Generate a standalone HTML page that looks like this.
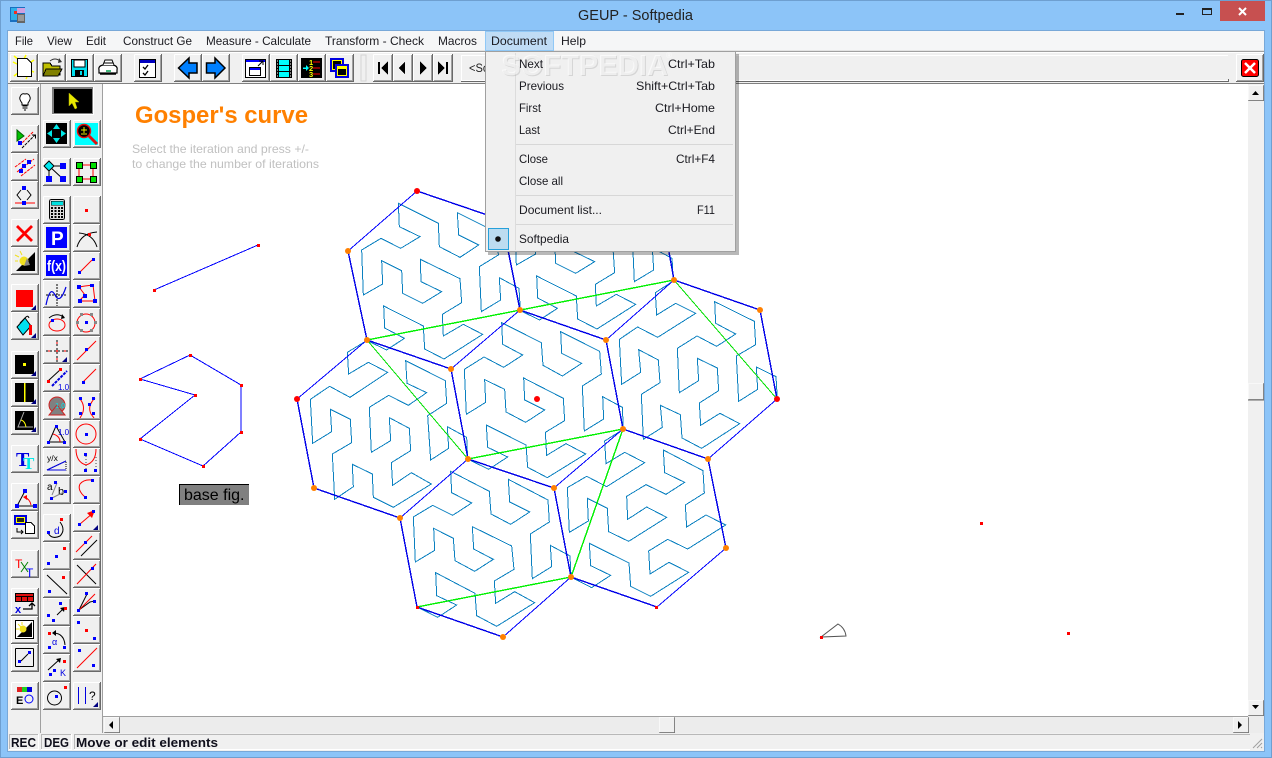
<!DOCTYPE html>
<html><head><meta charset="utf-8"><title>GEUP - Softpedia</title>
<style>
html,body{margin:0;padding:0;background:#8cc4f8;width:1272px;height:758px;overflow:hidden}
svg{display:block;position:absolute;left:0;top:0;font-family:"Liberation Sans",sans-serif}
.c{fill:none;stroke:#0a80c0;stroke-width:1;vector-effect:non-scaling-stroke;shape-rendering:crispEdges}
.tn{fill:none;stroke:#0000ff;stroke-width:1;shape-rendering:crispEdges}
.tk{fill:none;stroke:#0000e8;stroke-width:1.4;shape-rendering:crispEdges}
.g1{fill:none;stroke:#00e000;stroke-width:1;shape-rendering:crispEdges}
.g2{fill:none;stroke:#00f000;stroke-width:1.4;shape-rendering:crispEdges}
.m{font-size:12px;fill:#1a1a20}
.k{shape-rendering:crispEdges}
.l{fill:none;stroke:#000;stroke-width:1}
.r{fill:none;stroke:#f00;stroke-width:1}
.bl{fill:#0000ff}.rd{fill:#ff0000}
</style></head><body>
<svg width="1272" height="758" viewBox="0 0 1272 758" xmlns="http://www.w3.org/2000/svg">
<defs>
<g id="b" class="k"><rect width="28" height="28" fill="#f0f0f0"/><path d="M0 0H27M0 0V27" stroke="#fff" fill="none" transform="translate(.5 .5)"/><path d="M0 27.500H28M27.500 0V28" stroke="#696969" fill="none"/><path d="M1 26.500H27M26.500 1V27" stroke="#a0a0a0" fill="none"/></g>
<g id="n" class="k"><rect width="20" height="28" fill="#f0f0f0"/><path d="M0 0H19M0 0V27" stroke="#fff" fill="none" transform="translate(.5 .5)"/><path d="M0 27.500H20M19.500 0V28" stroke="#696969" fill="none"/><path d="M1 26.500H19M18.500 1V27" stroke="#a0a0a0" fill="none"/></g>
<path id="cn" d="M0 5L5 0V5Z" fill="#000080"/>
<polyline id="curveA" class="c" points="80,481 140,510 193,475 134,444 131,378 250,438 254,507 312,537 428,463 370,433 310,468 307,403 365,368 360,296 241,238 243,305 305,335 248,370 188,340 185,272 125,242 128,312 70,345 65,210 123,175 182,205 240,170 178,140 175,70 295,130 298,200 360,232 416,195 356,165 352,98 472,158 475,225 418,260 424,395 482,360 478,293 537,325 541,391"/>
</defs>

<!-- window chrome -->
<rect width="1272" height="758" fill="#8cc4f8"/>
<rect x=".5" y=".5" width="1271" height="757" fill="none" stroke="#6e9fd0" class="k"/>
<text x="635.500" y="20" font-size="14.500" text-anchor="middle" fill="#222">GEUP - Softpedia</text>
<g class="k"><rect x="1176" y="13" width="8" height="2" fill="#222"/>
<rect x="1202.500" y="8.500" width="9" height="6" fill="none" stroke="#222"/><rect x="1202" y="8" width="10" height="2" fill="#222"/>
<rect x="1220" y="1" width="45" height="20" fill="#c75050"/></g>
<path d="M1239 8L1246 15M1246 8L1239 15" stroke="#fff" stroke-width="2" fill="none"/>
<!-- app icon -->
<g class="k"><rect x="10" y="7" width="15" height="15" fill="#1a6fc0"/><rect x="11" y="8" width="6" height="12" fill="#30b0e8"/><rect x="14" y="11" width="3" height="3" fill="#f03020"/><rect x="17" y="8" width="8" height="5" fill="#d0a0e0"/><rect x="17" y="14" width="8" height="9" fill="#666"/><path d="M18 16h6M18 18h6M18 20h6" stroke="#ccc"/></g>

<!-- client -->
<rect x="8" y="31" width="1256" height="720" fill="#f0f0f0"/>
<rect x="8" y="31" width="1256" height="20" fill="#f5f6f7"/>
<rect x="8" y="30" width="1257" height="1" fill="#78a8d8"/>
<rect x="7" y="30" width="1" height="722" fill="#78a8d8"/>
<rect x="1264" y="30" width="1" height="722" fill="#78a8d8"/>
<rect x="7" y="751" width="1258" height="1" fill="#78a8d8"/>
<rect x="8" y="50" width="1256" height="1" fill="#e4e4e4"/>
<rect x="8" y="51" width="1256" height="1" fill="#a0a0a0"/>
<rect x="8" y="52" width="1256" height="1" fill="#fff"/>

<g class="m" lengthAdjust="spacingAndGlyphs">
<text x="15" y="45" textLength="18" lengthAdjust="spacingAndGlyphs">File</text><text x="47" y="45" textLength="25" lengthAdjust="spacingAndGlyphs">View</text><text x="86" y="45" textLength="20" lengthAdjust="spacingAndGlyphs">Edit</text><text x="123" y="45" textLength="69" lengthAdjust="spacingAndGlyphs">Construct Ge</text><text x="206" y="45" textLength="105" lengthAdjust="spacingAndGlyphs">Measure - Calculate</text><text x="325" y="45" textLength="99" lengthAdjust="spacingAndGlyphs">Transform - Check</text><text x="438" y="45" textLength="39" lengthAdjust="spacingAndGlyphs">Macros</text><text x="561" y="45" textLength="25" lengthAdjust="spacingAndGlyphs">Help</text>
</g>

<!-- drawing area -->
<rect x="103" y="84" width="1145" height="632" fill="#fff"/>
<rect x="8" y="83" width="1256" height="1" fill="#808080"/>
<rect x="40" y="84" width="1" height="650" fill="#a0a0a0"/>
<rect x="102" y="84" width="1" height="650" fill="#a0a0a0"/>

<text x="135" y="123" font-size="24" font-weight="bold" fill="#ff8000" textLength="173" lengthAdjust="spacingAndGlyphs">Gosper's curve</text>
<text x="132" y="153" font-size="12" fill="#c0c0c0" textLength="177" lengthAdjust="spacingAndGlyphs">Select the iteration and press +/-</text>
<text x="132" y="168" font-size="12" fill="#c0c0c0" textLength="187" lengthAdjust="spacingAndGlyphs">to change the number of iterations</text>

<!-- small figures -->
<path class="tn" d="M154 290L258 245M140 379L190 355L241 385V432L203 466L140 439L195 395L140 379"/>
<g class="rd k"><rect x="153" y="289" width="3" height="3"/><rect x="257" y="244" width="3" height="3"/><rect x="139" y="378" width="3" height="3"/><rect x="189" y="354" width="3" height="3"/><rect x="240" y="384" width="3" height="3"/><rect x="240" y="431" width="3" height="3"/><rect x="202" y="465" width="3" height="3"/><rect x="139" y="438" width="3" height="3"/><rect x="194" y="394" width="3" height="3"/></g>
<g class="k"><rect x="178" y="483" width="72" height="23" fill="#fff"/><rect x="179" y="484" width="70" height="21" fill="#808080"/><path d="M179 484.500H249M179.500 484V505" stroke="#000"/></g>
<text x="184" y="500" font-size="16" fill="#000">base fig.</text>
<path d="M821 637L838 624Q845 628 846 636Z" fill="none" stroke="#555" stroke-width="1"/>
<g class="rd k"><rect x="820" y="636" width="3" height="3"/><rect x="980" y="522" width="3" height="3"/><rect x="1067" y="632" width="3" height="3"/></g>

<!-- curves -->
<g transform="translate(340 180) scale(.33333)"><use href="#curveA"/></g>
<g transform="translate(493 150) scale(.33333)"><use href="#curveA"/></g>
<g transform="translate(290 340) scale(.33333)"><polyline class="c" points="533,358 530,292 472,260 476,325 422,360 413,227 470,190 466,122 347,62 351,130 410,158 355,196 296,166 238,202 244,337 302,302 298,233 358,265 362,332 304,368 308,436 364,398 424,432 310,502 250,472 247,402 187,373 190,440 134,478 127,342 185,308 181,238 121,208 125,275 68,310 61,178 119,139 180,172 293,97 235,67 176,102 172,37 230,2"/></g>
<g transform="translate(400 460) scale(.33333)"><polyline class="c" points="52,441 113,472 170,435 110,407 107,338 225,400 230,467 290,499 404,428 344,395 287,430 283,363 342,328 335,258 217,200 221,267 280,298 224,334 165,302 160,235 101,205 104,271 46,306 40,171 98,136 158,166 215,129 155,98 152,34 268,94 273,162 332,193 389,156 329,126 325,58 444,120 448,186 391,222 397,356 455,320 451,256 510,288 513,352"/></g>
<g transform="translate(450 310) scale(.33333)"><polyline class="c" points="55,448 116,478 173,441 113,412 109,345 228,405 233,472 292,503 407,432 348,401 290,436 286,367 344,332 340,265 221,204 224,270 284,300 227,337 168,306 164,238 104,209 107,277 49,313 43,178 102,141 161,172 218,135 158,103 155,38 274,98 279,166 337,198 395,160 335,130 332,65 449,124 454,192 397,228 403,363 461,327 458,260 517,292 520,358"/></g>
<g transform="translate(600 270) scale(.33333)"><polyline class="c" points="532,388 528,320 469,291 473,358 416,394 409,258 467,224 463,154 344,95 347,160 407,192 350,229 291,198 232,235 238,368 296,332 292,265 352,294 356,362 298,399 302,466 360,430 419,461 305,535 246,504 241,434 181,406 187,472 130,508 124,373 180,338 175,270 116,239 122,307 65,343 58,208 113,171 173,202 287,130 227,100 170,135 166,68 223,31"/></g>
<g transform="translate(555 425) scale(.33333)"><polyline class="c" points="49,457 110,488 167,451 107,422 103,355 222,414 227,484 287,514 401,442 342,412 285,447 281,378 338,343 398,372 512,300 453,270 395,306 391,240 448,204 444,137 325,75 329,143 389,172 333,208 273,179 215,214 218,283 275,246 335,277 221,349 161,320 157,250 97,220 100,288 43,322 37,188 95,154 155,185 269,113 209,82 153,116 149,48 205,13"/></g>

<!-- hex edges -->
<path class="tn" d="M417 191L348 251M367 340L297 399M400 518L468 459M520 310L451 369M606 340L674 280M623 429L554 488M708 459L777 399M571 577L503 637M726 548L657 607"/>
<path class="tk" d="M417 191L502 220L520 310M348 251L367 340L451 369L468 459M297 399L314 488L400 518L417 607L503 637M468 459L554 488L571 577L657 607M520 310L606 340L623 429L708 459L726 548M674 280L658 191M674 280L760 310L777 399"/>
<path class="g1" d="M367 340L468 459M674 280L777 399"/>
<path class="g2" d="M367 340L674 280M468 459L623 429L571 577L417 607"/>
<g fill="#ff8000"><circle cx="348" cy="251" r="3"/><circle cx="367" cy="340" r="3"/><circle cx="451" cy="369" r="3"/><circle cx="520" cy="310" r="3"/><circle cx="606" cy="340" r="3"/><circle cx="674" cy="280" r="3"/><circle cx="760" cy="310" r="3"/><circle cx="708" cy="459" r="3"/><circle cx="726" cy="548" r="3"/><circle cx="623" cy="429" r="3"/><circle cx="468" cy="459" r="3"/><circle cx="554" cy="488" r="3"/><circle cx="571" cy="577" r="3"/><circle cx="503" cy="637" r="3"/><circle cx="400" cy="518" r="3"/><circle cx="314" cy="488" r="3"/></g>
<g fill="#f00"><circle cx="417" cy="191" r="3"/><circle cx="297" cy="399" r="3"/><circle cx="777" cy="399" r="3"/><circle cx="537" cy="399" r="3"/></g>
<g class="rd k"><rect x="655" y="606" width="3" height="3"/><rect x="416" y="606" width="3" height="3"/></g>

<!-- scrollbars -->
<rect x="1248" y="84" width="16" height="632" fill="#f0f0f0"/>
<rect x="103" y="716" width="1161" height="17" fill="#ececec"/>
<rect x="103" y="716" width="1145" height="1" fill="#a0a0a0"/>
<use href="#b" transform="translate(1248 85) scale(.57 .57)"/>
<use href="#b" transform="translate(1248 700) scale(.57 .57)"/>
<use href="#b" transform="translate(1248 383) scale(.57 .62)"/>
<use href="#b" transform="translate(104 717) scale(.57 .57)"/>
<use href="#b" transform="translate(1233 717) scale(.57 .57)"/>
<use href="#b" transform="translate(659 717) scale(.57 .57)"/>
<path d="M1252 95L1255.500 91L1259 95ZM1252 705L1255.500 709L1259 705ZM113 721L109 725L113 729ZM1238 721L1242 725L1238 729Z" fill="#000"/>

<!-- status bar -->
<g class="k"><rect x="8" y="733" width="1256" height="18" fill="#f0f0f0"/>
<path d="M9.500 749.500V734.500H38.500" stroke="#b8b8b8" fill="none"/><path d="M41.500 749.500V734.500H71.500" stroke="#b8b8b8" fill="none"/><path d="M74.500 749.500V734.500H1250" stroke="#b8b8b8" fill="none"/>
<path d="M9 749.500H38.500V734M41 749.500H71.500V734M74 749.500H1250" stroke="#fff" fill="none"/></g>
<g font-size="13" font-weight="bold" fill="#10101c"><text x="11" y="747" textLength="25" lengthAdjust="spacingAndGlyphs">REC</text><text x="44" y="747" textLength="25" lengthAdjust="spacingAndGlyphs">DEG</text><text x="76" y="747" textLength="142" lengthAdjust="spacingAndGlyphs">Move or edit elements</text></g>
<path d="M1262 739L1253 748M1262 743L1257 748M1262 747L1261 748" stroke="#a0a0a0" fill="none"/>

<!-- top toolbar -->
<use href="#b" x="10" y="54"/><use href="#b" x="38" y="54"/><use href="#b" x="66" y="54"/><use href="#b" x="94" y="54"/>
<use href="#b" x="134" y="54"/><use href="#b" x="174" y="54"/><use href="#b" x="202" y="54"/>
<use href="#b" x="242" y="54"/><use href="#b" x="270" y="54"/><use href="#b" x="298" y="54"/><use href="#b" x="326" y="54"/>
<rect x="361" y="55" width="5" height="26" fill="#f0f0f0" stroke="#d4d4d4" class="k"/>
<use href="#n" x="373" y="54"/><use href="#n" x="393" y="54"/><use href="#n" x="413" y="54"/><use href="#n" x="433" y="54"/>
<g class="k"><rect x="461" y="55" width="768" height="27" fill="#f0f0f0"/><path d="M461.500 81V55.500H1228" stroke="#fff" fill="none"/><path d="M461 81.500H1229M1228.500 79V82" stroke="#696969" fill="none"/><path d="M462 80.500H1228" stroke="#fff" fill="none"/></g>
<text x="469" y="72" font-size="12" fill="#222" textLength="20" lengthAdjust="spacingAndGlyphs">&lt;So</text>
<use href="#b" x="1236" y="54"/>
<rect x="1241.500" y="59.500" width="17" height="17" rx="2" fill="#f00" stroke="#000"/>
<path d="M1245 63L1255 73M1255 63L1245 73" stroke="#fff" stroke-width="2.500" fill="none"/>

<!-- tb icons -->
<path d="M13 62L17 64M14 56L19 60M26 55L24 59M34 60L31 62M34 72L31 71M14 76L18 73M26 79L27 77" stroke="#ff0" stroke-width="1.500"/>
<path d="M17.500 58.500H27L31.500 63V76.500H17.500Z" fill="#fff" stroke="#000" class="k"/>
<g class="k"><path d="M43 63H50L52 66H60V75H43Z" fill="#c0c000" stroke="#000"/><path d="M46 69H62L58 76H43Z" fill="#808000" stroke="#000"/></g>
<path d="M50 61Q55 57 60 61" fill="none" stroke="#333"/><path d="M59 58L62 62L58 63Z" fill="#333"/>
<g class="k"><rect x="71.500" y="59.500" width="16" height="17" fill="#00e0f0" stroke="#000"/><rect x="74" y="60" width="11" height="7" fill="#fff" stroke="#000"/><rect x="75" y="70" width="9" height="6" fill="#000"/><rect x="80" y="71" width="2" height="4" fill="#00e0f0"/></g>
<path d="M99 70Q98 66 103 65H113Q118 66 117 70V73H99Z" fill="#fff" stroke="#000" stroke-width="1.200"/><path d="M103 65L105 60H112L114 65M104 63H113" fill="#fff" stroke="#000"/><path d="M106 71H111" stroke="#00a050" stroke-width="1.500"/><path d="M100 74H116" stroke="#000" stroke-width="1.500"/>
<g class="k"><rect x="139.500" y="59.500" width="16" height="18" fill="#fff" stroke="#000"/><rect x="140" y="60" width="15" height="3" fill="#0000c0"/></g>
<path d="M143 67L145 69L148 65M143 73L145 75L148 71" stroke="#000" fill="none" stroke-width="1.300"/>
<path d="M178.500 68L189 58V63H197V73H189V78Z" fill="#0080ff" stroke="#000" stroke-width="1.500"/>
<path d="M225 68L215 58V63H206.500V73H215V78Z" fill="#0080ff" stroke="#000" stroke-width="1.500"/>
<g class="k"><rect x="245.500" y="59.500" width="20" height="18" fill="#fff" stroke="#000"/><rect x="246" y="60" width="19" height="2" fill="#00f"/><rect x="249.500" y="67.500" width="11" height="8" fill="#fff" stroke="#000"/><rect x="250" y="68" width="10" height="2" fill="#00f"/></g>
<path d="M258 66L263 61M259 61H263V65" stroke="#000" fill="none"/>
<g class="k"><rect x="276" y="59" width="16" height="19" fill="#000"/><rect x="279" y="60" width="10" height="5" fill="#00ffff"/><rect x="279" y="66" width="10" height="5" fill="#00ffff"/><rect x="279" y="72" width="10" height="5" fill="#00ffff"/><path d="M277 61h1M277 64h1M277 67h1M277 70h1M277 73h1M277 76h1M290 61h1M290 64h1M290 67h1M290 70h1M290 73h1M290 76h1" stroke="#fff"/></g>
<g class="k"><rect x="301" y="58" width="21" height="20" fill="#000"/><path d="M313 62h7M313 68h7M313 74h7" stroke="#f00"/><path d="M303 68h4" stroke="#00ffff" stroke-width="1.500"/></g>
<path d="M306 65l3 3l-3 3z" fill="#00ffff"/><g fill="#ff0" font-size="7.500" font-weight="bold"><text x="309" y="65">1</text><text x="309" y="71">2</text><text x="309" y="77">3</text></g>
<g class="k"><rect x="331" y="59" width="12" height="12" fill="#ff0" stroke="#0000e0" stroke-width="2"/><rect x="333" y="61" width="8" height="8" fill="#000"/><rect x="336" y="65" width="12" height="12" fill="#ff0" stroke="#0000e0" stroke-width="2"/><rect x="338" y="67" width="8" height="8" fill="#000"/><rect x="338" y="67" width="8" height="2" fill="#ff0"/></g>
<g fill="#000" class="k"><rect x="378" y="62" width="2" height="12"/><path d="M388 61.500V74.500L381 68ZM405 61.500V74.500L399 68ZM420 61.500V74.500L427 68ZM438 61.500V74.500L445 68Z"/><rect x="446" y="62" width="2" height="12"/></g>

<!-- left col 1 -->
<use href="#b" x="11" y="87"/><use href="#b" x="11" y="125"/><use href="#b" x="11" y="153"/><use href="#b" x="11" y="181"/><use href="#b" x="11" y="219"/><use href="#b" x="11" y="247"/><use href="#b" x="11" y="284"/><use href="#b" x="11" y="312"/><use href="#b" x="11" y="351"/><use href="#b" x="11" y="379"/><use href="#b" x="11" y="407"/><use href="#b" x="11" y="445"/><use href="#b" x="11" y="483"/><use href="#b" x="11" y="511"/><use href="#b" x="11" y="550"/><use href="#b" x="11" y="588"/><use href="#b" x="11" y="616"/><use href="#b" x="11" y="644"/><use href="#b" x="11" y="682"/>
<!-- bulb -->
<path d="M22 103Q19 99 20 97Q21 93 25 94Q29 93 30 97Q31 99 28 103V105H22Z" fill="#fff" stroke="#000"/><path d="M22.500 106H27.500M22.500 108H27.500M24 110H26" stroke="#000"/>
<!-- line tool -->
<path d="M17 130L24 136L17 141Z" fill="#00c000" stroke="#006000"/><path class="r" stroke-dasharray="3 1" d="M33 132L20 145"/><path class="l" stroke-dasharray="3 1" d="M22 148L35 135"/><path d="M32 135H35.500V138.500" stroke="#000" fill="none"/><rect class="bl k" x="18" y="141" width="4" height="4"/>
<!-- hatch -->
<path class="r" stroke-dasharray="3 1" d="M15 167L26 159M17 172L34 159M21 176L35 165"/><g class="bl k"><rect x="27" y="160" width="4" height="4"/><rect x="22" y="164" width="4" height="4"/><rect x="19" y="169" width="4" height="4"/></g>
<!-- reflect -->
<path class="r" d="M15 203H35" stroke-width="1.500"/><g class="bl k"><rect x="22" y="186" width="4" height="4"/><rect x="22" y="201" width="4" height="4"/></g>
<path d="M21 190L17 195L21 200M27 190L31 195L27 200" class="l"/>
<!-- X -->
<path d="M17 226L32 241M32 226L17 241" stroke="#f00" stroke-width="2.800" fill="none"/>
<!-- light -->
<path d="M16 271L35 252V271Z" fill="#000"/><circle cx="24" cy="261" r="4.500" fill="#f0e020"/><path d="M27 258L30 265L24 266Z" fill="#888"/><path d="M19 257L15 255M22 255L20 251M18 261H15" stroke="#f0e020"/>
<!-- color -->
<rect class="rd k" x="16" y="290" width="17" height="17"/><use href="#cn" x="31" y="305"/>
<!-- paint -->
<path d="M17 327L25 318L31 326L23 335Z" fill="#00e0f0" stroke="#000"/><path d="M20 323L26 317Q28 315 29 318" fill="none" stroke="#000"/><path d="M29 325L32 325V335H29Z" fill="#f00"/><use href="#cn" x="31" y="333"/>
<!-- black panels -->
<g class="k"><rect x="15" y="355" width="19" height="19"/><rect x="23" y="363" width="3" height="3" fill="#ff0"/><rect x="15" y="383" width="19" height="19"/><rect x="24" y="383" width="1.500" height="19" fill="#ff0"/><rect x="15" y="411" width="19" height="19"/></g>
<use href="#cn" x="31" y="371"/><use href="#cn" x="31" y="399"/><use href="#cn" x="31" y="427"/>
<path d="M24 412L18 427H33" stroke="#aaa" fill="none"/><path d="M21 420Q25 421 26 427" stroke="#ff0" fill="none"/>
<!-- TT -->
<text x="16" y="466" font-family="Liberation Serif,serif" font-weight="bold" font-size="20" fill="#0000e0">T</text><text x="23" y="469" font-family="Liberation Serif,serif" font-weight="bold" font-size="17" fill="#00e8e8">T</text>
<!-- angle -->
<path class="l" d="M25 491L17 506H35"/><path class="r" stroke-width="1.200" d="M24 497Q30 499 31 505"/><path d="M23 497L27 495V500Z" fill="#f00"/><g class="bl k"><rect x="23" y="489" width="4" height="4"/><rect x="15" y="504" width="4" height="4"/><rect x="33" y="504" width="4" height="4"/></g>
<!-- macro -->
<g class="k"><rect x="15" y="516" width="11" height="8" fill="#ff0" stroke="#0000e0" stroke-width="2"/><rect x="17" y="518" width="7" height="4" fill="#222"/><path d="M25.500 522.500H31L34.500 526V533.500H25.500Z" fill="#fff" stroke="#000"/></g><path d="M17 528V532H23M21 530L23 532L21 534" class="l"/>
<!-- TxT -->
<g font-size="12"><text x="15" y="568" fill="#f00">T</text><text x="26" y="577" fill="#00f">T</text></g><path d="M21 562L28 572M28 562L21 572" stroke="#008000" fill="none"/>
<!-- table -->
<g class="k"><rect x="15" y="593" width="19" height="9" fill="#000"/><rect x="16" y="597" width="5" height="4" fill="#e01010"/><rect x="22" y="597" width="5" height="4" fill="#e01010"/><rect x="28" y="597" width="5" height="4" fill="#e01010"/><rect x="16" y="594" width="17" height="2" fill="#e01010"/></g>
<text x="15" y="613" font-size="11" font-weight="bold" fill="#0000e0">x</text><path d="M23 609H32V604M29 606L32 603L35 606" stroke="#000" fill="none" stroke-width="1.300"/>
<!-- light frame -->
<g class="k"><rect x="15.500" y="620.500" width="18" height="18" fill="#fff" stroke="#000"/></g><path d="M17 637L32 622V637Z" fill="#000"/><circle cx="23" cy="629" r="3.500" fill="#f0e020"/><path d="M18 624L21 627M16 629H19M22 622V625" stroke="#f0e020"/>
<!-- frame arrow -->
<rect x="15.500" y="648.500" width="18" height="18" rx="1" fill="#f0f0f0" stroke="#000" class="k"/><path class="l" d="M21 661L28 654"/><g class="bl k"><rect x="18" y="660" width="3" height="3"/><rect x="28" y="651" width="3" height="3"/></g>
<!-- color EO -->
<g class="k"><rect x="17" y="687" width="5" height="5" fill="#e02020"/><rect x="22" y="687" width="5" height="5" fill="#20d020"/><rect x="27" y="687" width="5" height="5" fill="#0000e0"/></g><text x="16" y="704" font-size="11" font-weight="bold">E</text><circle cx="29" cy="699" r="4" fill="none" stroke="#00f"/>

<!-- left col 2 -->
<g class="k"><rect x="52" y="87" width="42" height="28" fill="#fff"/><rect x="52" y="87" width="41" height="27" fill="#808080"/><rect x="54" y="89" width="38" height="24" fill="#000"/></g>
<path d="M69 93V106L72 103L75 109L77 108L75 102L79 102Z" fill="#e8e800" stroke="#b0b000" stroke-width=".500"/>
<use href="#b" x="43" y="120"/><use href="#b" x="73" y="120"/><use href="#b" x="43" y="158"/><use href="#b" x="73" y="158"/>
<use href="#b" x="43" y="196"/><use href="#b" x="43" y="224"/><use href="#b" x="43" y="252"/><use href="#b" x="43" y="280"/><use href="#b" x="43" y="308"/><use href="#b" x="43" y="336"/><use href="#b" x="43" y="364"/><use href="#b" x="43" y="392"/><use href="#b" x="43" y="420"/><use href="#b" x="43" y="448"/><use href="#b" x="43" y="476"/>
<use href="#b" x="43" y="514"/><use href="#b" x="43" y="542"/><use href="#b" x="43" y="570"/><use href="#b" x="43" y="598"/><use href="#b" x="43" y="626"/><use href="#b" x="43" y="654"/><use href="#b" x="43" y="682"/>
<use href="#b" x="73" y="196"/><use href="#b" x="73" y="224"/><use href="#b" x="73" y="252"/><use href="#b" x="73" y="280"/><use href="#b" x="73" y="308"/><use href="#b" x="73" y="336"/><use href="#b" x="73" y="364"/><use href="#b" x="73" y="392"/><use href="#b" x="73" y="420"/><use href="#b" x="73" y="448"/><use href="#b" x="73" y="476"/><use href="#b" x="73" y="504"/><use href="#b" x="73" y="532"/><use href="#b" x="73" y="560"/><use href="#b" x="73" y="588"/><use href="#b" x="73" y="616"/><use href="#b" x="73" y="644"/><use href="#b" x="73" y="682"/>

<!-- nav 4 arrows -->
<rect x="46" y="123" width="21" height="21" fill="#000" class="k"/><path d="M56.500 124L60 129H53ZM56.500 143L60 138H53ZM47 133.500L52 130V137ZM66 133.500L61 130V137Z" fill="#00e8e8"/>
<!-- zoom -->
<rect x="75" y="123" width="23" height="22" fill="#00ffff" class="k"/><path d="M89 136L97 144" stroke="#e01010" stroke-width="3"/><circle cx="84" cy="131" r="6.500" fill="#000" stroke="#e01010" stroke-width="1.500"/><path d="M81 130H87M84 127V133M81 134H87" stroke="#e8e800"/>
<!-- diagram -->
<path class="l" d="M49 166H63M49 166L49 179M49 166L63 179"/><path d="M49 161L54 166L49 171L44 166Z" fill="#00e8f0" stroke="#000"/><g class="bl k"><rect x="60" y="163" width="6" height="6" /><rect x="46" y="176" width="6" height="6"/><rect x="60" y="176" width="6" height="6"/></g>
<path d="M79 165H93V179H79Z" class="r"/><g fill="#00e000" stroke="#000" class="k"><rect x="76.500" y="162.500" width="6" height="6"/><rect x="90.500" y="162.500" width="6" height="6"/><rect x="76.500" y="176.500" width="6" height="6"/><rect x="90.500" y="176.500" width="6" height="6"/></g>
<!-- calculator -->
<g class="k"><rect x="49.500" y="199.500" width="15" height="20" rx="2" fill="#ddd" stroke="#000"/><rect x="51" y="201" width="12" height="4" fill="#00e0e0" stroke="#000" stroke-width=".500"/><path d="M51 208h2M54.500 208h2M58 208h2M61 208h2M51 211h2M54.500 211h2M58 211h2M61 211h2M51 214h2M54.500 214h2M58 214h2M61 214h2M51 217h2M54.500 217h2M58 217h2M61 217h2" stroke="#000" stroke-width="2"/></g>
<rect class="rd k" x="85" y="209" width="3" height="3"/>
<!-- P -->
<rect class="bl k" x="46" y="227" width="21" height="21"/><text x="51" y="245" font-size="19" font-weight="bold" fill="#fff">P</text>
<path class="l" d="M77 247Q81 233 97 232M79 233Q93 234 97 247"/><rect class="rd k" x="88" y="233" width="3" height="3"/>
<!-- fx -->
<rect class="bl k" x="46" y="255" width="21" height="21"/><text x="47" y="271" font-size="15" font-weight="bold" fill="#fff" textLength="19" lengthAdjust="spacingAndGlyphs">f(x)</text>
<path class="r" d="M80 272L92 260"/><g class="bl k"><rect x="78" y="271" width="3" height="3"/><rect x="92" y="258" width="3" height="3"/></g>
<!-- func -->
<path class="l" stroke-dasharray="2 1" d="M46 295H67M57 284V306"/><path d="M46 305Q50 285 55 295T66 287" fill="none" stroke="#0000e0" stroke-width="1.200"/>
<path class="r" d="M79 287L85 286L93 285L95 301H79L85 295Z"/><g class="bl k"><rect x="77" y="285" width="4" height="4"/><rect x="90" y="284" width="4" height="3"/><rect x="83" y="294" width="4" height="4"/><rect x="78" y="299" width="4" height="4"/><rect x="93" y="299" width="4" height="4"/></g>
<!-- ellipse -->
<ellipse cx="57" cy="325" rx="8" ry="6" class="r"/><path class="l" d="M49 318Q56 312 64 317"/><path d="M62 314L65 318L61 319Z"/><rect class="bl k" x="51" y="319" width="3" height="3"/>
<circle cx="86" cy="323" r="9" class="r"/><g fill="#888" class="k"><rect x="80" y="313" width="3" height="3"/><rect x="90" y="313" width="3" height="3"/><rect x="76" y="321" width="3" height="3"/><rect x="94" y="321" width="3" height="3"/><rect x="80" y="329" width="3" height="3"/><rect x="90" y="329" width="3" height="3"/></g><rect class="bl k" x="85" y="321" width="3" height="3"/>
<!-- cross -->
<path d="M46 351H68M57 340V362" stroke="#000" stroke-dasharray="2 2"/><path d="M48 351H68M57 342V362" stroke="#f00" stroke-dasharray="2 6"/><use href="#cn" x="62" y="357"/>
<path class="r" d="M77 360L96 341"/><rect class="bl k" x="85" y="348" width="3" height="3"/>
<!-- dist 1.0 -->
<path class="l" d="M48 381L61 369"/><g class="rd k"><rect x="47" y="380" width="3" height="3"/><rect x="59" y="368" width="3" height="3"/></g><path d="M52 386L67 371" stroke="#0000e0" stroke-width="2" stroke-dasharray="3 1"/><text x="58" y="390" font-size="8" fill="#0000e0">1.0</text>
<path class="r" d="M83 382L96 369"/><rect class="bl k" x="82" y="381" width="3" height="3"/>
<!-- area -->
<circle cx="57" cy="405" r="8" fill="#808080" stroke="#d02020"/><path d="M49 415L57 405L65 415Z" fill="#808080" stroke="#d02020"/><text x="55" y="408" font-size="7.500" fill="#00e8f0">1.0</text>
<path class="r" d="M79 398Q85 404 83 412Q82 415 80 418M95 398Q87 406 91 414L94 418"/><g class="bl k"><rect x="79" y="397" width="3" height="3"/><rect x="92" y="397" width="3" height="3"/><rect x="79" y="412" width="3" height="3"/><rect x="92" y="412" width="3" height="3"/><rect x="88" y="403" width="3" height="3"/></g>
<!-- triangle 1.0 -->
<path class="l" d="M56 426L49 442H65Z"/><path class="r" d="M53 434Q60 436 60 442"/><g class="bl k"><rect x="55" y="425" width="3" height="3"/><rect x="47" y="441" width="3" height="3"/><rect x="63" y="441" width="3" height="3"/></g><text x="58" y="435" font-size="8" fill="#0000e0">1.0</text>
<circle cx="86" cy="434" r="10" class="r"/><rect class="bl k" x="85" y="433" width="3" height="3"/>
<!-- y/x -->
<text x="47" y="461" font-size="8.500" fill="#000">y/x</text><path d="M47 470L66 461V470Z" fill="none" stroke="#000" stroke-dasharray="1 1"/><path d="M47 470L66 461M47 470H66" stroke="#0000e0" fill="none"/>
<path class="r" d="M76 449Q76 462 86 465Q96 462 96 449"/><path d="M86 453V471M96 457V471" stroke="#444" stroke-dasharray="1 2"/><g class="bl k"><rect x="84" y="453" width="3" height="3"/><rect x="84" y="469" width="3" height="3"/><rect x="94" y="469" width="3" height="3"/></g>
<!-- a/b -->
<text x="47" y="490" font-size="10" fill="#000">a</text><text x="58" y="495" font-size="11" fill="#000">b</text><path d="M52 495L57 483M52 498L66 491" stroke="#888" fill="none"/><g class="bl k"><rect x="54" y="481" width="3" height="3"/><rect x="50" y="497" width="3" height="3"/><rect x="64" y="490" width="3" height="3"/></g>
<path class="r" d="M85 497Q77 490 80 484Q84 479 92 480"/><g class="bl k"><rect x="91" y="479" width="3" height="3"/><rect x="84" y="496" width="3" height="3"/></g>
<!-- d -->
<path class="r" d="M80 524L93 513" stroke-width="1.500"/><path d="M95 510L87 513L92 518Z" fill="#f00"/><g class="bl k"><rect x="78" y="523" width="3" height="3"/><rect x="92" y="510" width="3" height="3"/></g><use href="#cn" x="93" y="525"/>
<path class="l" d="M60 522Q66 530 60 536Q52 540 48 533"/><text x="54" y="534" font-size="10" fill="#0000e0">d</text><rect class="rd k" x="60" y="518" width="3" height="3"/><rect class="bl k" x="47" y="531" width="3" height="3"/>
<!-- col B tail -->
<path class="r" d="M76 552L92 536"/><path class="l" d="M81 556L97 540"/><rect class="bl k" x="84" y="541" width="3" height="3"/>
<path class="l" d="M77 565L96 584"/><path class="r" d="M77 584L96 564"/><rect class="bl k" x="91" y="567" width="3" height="3"/>
<path class="l" d="M79 610L87 594M79 610L90 602Q94 601 96 601"/><path class="r" d="M79 610L95 594"/><g class="bl k"><rect x="85" y="592" width="3" height="3"/><rect x="93" y="600" width="3" height="3"/><rect x="77" y="609" width="3" height="3"/></g>
<g class="bl k"><rect x="77" y="621" width="3" height="3"/><rect x="93" y="637" width="3" height="3"/></g><rect class="rd k" x="85" y="629" width="3" height="3"/>
<path class="r" d="M77 668L97 648"/><g class="bl k"><rect x="78" y="649" width="3" height="3"/><rect x="92" y="664" width="3" height="3"/></g>
<path d="M78.500 687V704M85.500 687V704" stroke="#0000e0" class="k"/><text x="89" y="700" font-size="12">?</text><use href="#cn" x="93" y="702"/>
<!-- col A tail -->
<g class="bl k"><rect x="47" y="562" width="3" height="3"/><rect x="55" y="555" width="3" height="3"/></g><rect class="rd k" x="63" y="547" width="3" height="3"/>
<path class="l" d="M47 575L67 594"/><rect class="rd k" x="62" y="576" width="3" height="3"/><rect class="bl k" x="48" y="590" width="3" height="3"/>
<path class="l" d="M57 615L64 608"/><path d="M65 607L60 608L64 612Z"/><g class="bl k"><rect x="47" y="614" width="3" height="3"/><rect x="52" y="619" width="3" height="3"/><rect x="59" y="602" width="3" height="3"/></g><rect class="rd k" x="64" y="607" width="3" height="3"/>
<rect class="rd k" x="48" y="632" width="3" height="3"/><path class="l" d="M53 633Q64 633 65 645"/><path d="M52 633L56 630V636Z"/><text x="52" y="645" font-size="9" fill="#0000e0">α</text><g class="bl k"><rect x="48" y="646" width="3" height="3"/><rect x="63" y="646" width="3" height="3"/></g>
<path class="l" d="M48 670L60 659"/><path d="M61 658L56 659L60 663Z"/><g class="bl k"><rect x="49" y="673" width="3" height="3"/><rect x="53" y="669" width="3" height="3"/></g><rect class="rd k" x="63" y="660" width="3" height="3"/><text x="60" y="676" font-size="9" fill="#0000e0">K</text>
<circle cx="54.500" cy="698" r="7" class="l"/><rect class="bl k" x="55" y="695" width="3" height="3"/><rect class="rd k" x="64" y="686" width="3" height="3"/>

<!-- Document menu highlight -->
<g class="k"><rect x="485" y="31" width="69" height="20" fill="#c0dcf5"/><rect x="485.500" y="31.500" width="68" height="19" fill="none" stroke="#90c8f6"/></g>
<text x="491" y="45" class="m" textLength="56" lengthAdjust="spacingAndGlyphs">Document</text>

<!-- popup -->
<g class="k"><rect x="488" y="54" width="251" height="201" fill="#000" opacity=".28"/><rect x="485" y="51" width="251" height="201" fill="#f0f0f0"/><rect x="485.500" y="51.500" width="250" height="200" fill="none" stroke="#a0a0a0"/>
<rect x="515" y="53" width="1" height="197" fill="#dcdcdc"/>
<rect x="516" y="144" width="217" height="1" fill="#d7d7d7"/><rect x="516" y="195" width="217" height="1" fill="#d7d7d7"/><rect x="516" y="224" width="217" height="1" fill="#d7d7d7"/>
<rect x="488" y="228" width="21" height="22" fill="#bcdcf0"/><rect x="488.500" y="228.500" width="20" height="21" fill="none" stroke="#26a0da"/></g>
<circle cx="498" cy="239" r="2.800" fill="#111"/>
<text x="501" y="75" font-size="29" font-weight="bold" fill="#888" opacity=".25" textLength="167" lengthAdjust="spacingAndGlyphs" transform="translate(1 1)">SOFTPEDIA</text>
<text x="501" y="75" font-size="29" font-weight="bold" fill="#fff" opacity=".6" textLength="167" lengthAdjust="spacingAndGlyphs">SOFTPEDIA</text>
<text x="666" y="58" font-size="8" fill="#fff" opacity=".7">®</text>
<g class="m">
<text x="519" y="68" textLength="24" lengthAdjust="spacingAndGlyphs">Next</text><text x="519" y="90" textLength="45" lengthAdjust="spacingAndGlyphs">Previous</text><text x="519" y="112" textLength="22" lengthAdjust="spacingAndGlyphs">First</text><text x="519" y="134" textLength="21" lengthAdjust="spacingAndGlyphs">Last</text><text x="519" y="163" textLength="29" lengthAdjust="spacingAndGlyphs">Close</text><text x="519" y="185" textLength="44" lengthAdjust="spacingAndGlyphs">Close all</text><text x="519" y="214" textLength="83" lengthAdjust="spacingAndGlyphs">Document list...</text><text x="519" y="243" textLength="50" lengthAdjust="spacingAndGlyphs">Softpedia</text>
<text x="668" y="68" textLength="47" lengthAdjust="spacingAndGlyphs">Ctrl+Tab</text><text x="636" y="90" textLength="79" lengthAdjust="spacingAndGlyphs">Shift+Ctrl+Tab</text><text x="655" y="112" textLength="60" lengthAdjust="spacingAndGlyphs">Ctrl+Home</text><text x="668" y="134" textLength="47" lengthAdjust="spacingAndGlyphs">Ctrl+End</text><text x="676" y="163" textLength="39" lengthAdjust="spacingAndGlyphs">Ctrl+F4</text><text x="697" y="214" textLength="18" lengthAdjust="spacingAndGlyphs">F11</text>
</g>
</svg>
</body></html>
